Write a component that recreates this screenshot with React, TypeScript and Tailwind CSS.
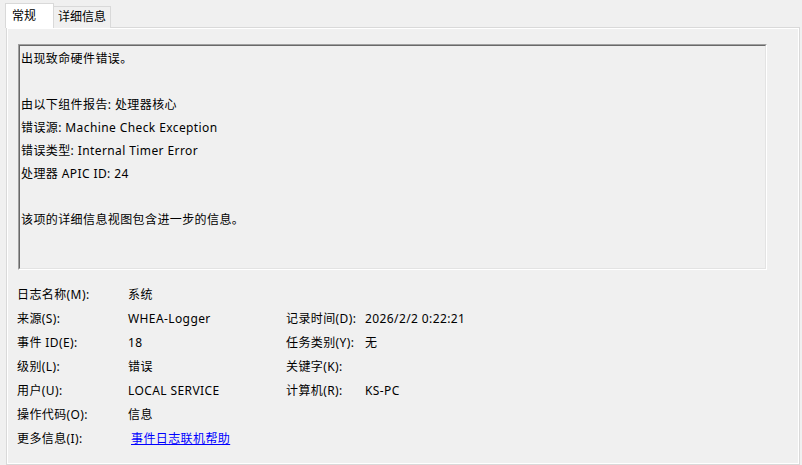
import React from 'react';

const rows: [string, React.ReactNode, string?, string?][] = [
  ['日志名称(M):', '系统'],
  ['来源(S):', 'WHEA-Logger', '记录时间(D):', '2026/2/2 0:22:21'],
  ['事件 ID(E):', '18', '任务类别(Y):', '无'],
  ['级别(L):', '错误', '关键字(K):', ''],
  ['用户(U):', 'LOCAL SERVICE', '计算机(R):', 'KS-PC'],
  ['操作代码(O):', '信息'],
  [
    '更多信息(I):',
    <a href="#" className="ml-[3px] text-[#0000ff] underline">
      事件日志联机帮助
    </a>,
  ],
];

export default function App() {
  return (
    <div
      className="w-[802px] h-[465px] overflow-hidden bg-[#f0f0f0] pt-[3px] pl-[5px] flex flex-col text-[12px] tracking-[0.4px] text-black"
      style={{ fontFamily: '"Noto Sans", "Noto Sans CJK SC", sans-serif' }}
    >
      {/* Tabs */}
      <div className="flex items-end h-[25px] relative z-10 tracking-normal">
        <div className="h-[25px] w-[49px] bg-white border border-b-0 border-[#d9d9d9] pl-[6px] pt-[4px] leading-[16px]">
          常规
        </div>
        <div className="h-[22px] w-[57px] bg-[#f0f0f0] border border-l-0 border-b-0 border-[#d9d9d9] pl-[4px] pt-[2px] leading-[16px]">
          详细信息
        </div>
      </div>

      {/* Panel */}
      <div className="ml-px w-[794px] flex-1 border border-[#d9d9d9] -mt-px">
        <div className="h-full border border-white pt-[15px] pl-[10px]">
          {/* Description box */}
          <div className="w-[749px] h-[226px] border border-[#a0a0a0] border-r-white border-b-white">
            <div className="h-full border border-[#696969] border-r-[#e3e3e3] border-b-[#e3e3e3] pl-px pt-px leading-[23px]">
              <div>出现致命硬件错误。</div>
              <div>&nbsp;</div>
              <div>由以下组件报告: 处理器核心</div>
              <div>错误源: Machine Check Exception</div>
              <div>错误类型: Internal Timer Error</div>
              <div>处理器 APIC ID: 24</div>
              <div>&nbsp;</div>
              <div>该项的详细信息视图包含进一步的信息。</div>
            </div>
          </div>

          {/* Properties */}
          <div className="mt-[13px] -ml-px">
            {rows.map(([l1, v1, l2, v2], i) => (
              <div key={i} className="flex h-[24px] items-center leading-[16px]">
                <div className="w-[111px]">{l1}</div>
                <div className="w-[158px]">{v1}</div>
                {l2 !== undefined && (
                  <>
                    <div className="w-[79px]">{l2}</div>
                    <div>{v2}</div>
                  </>
                )}
              </div>
            ))}
          </div>
        </div>
      </div>
    </div>
  );
}
